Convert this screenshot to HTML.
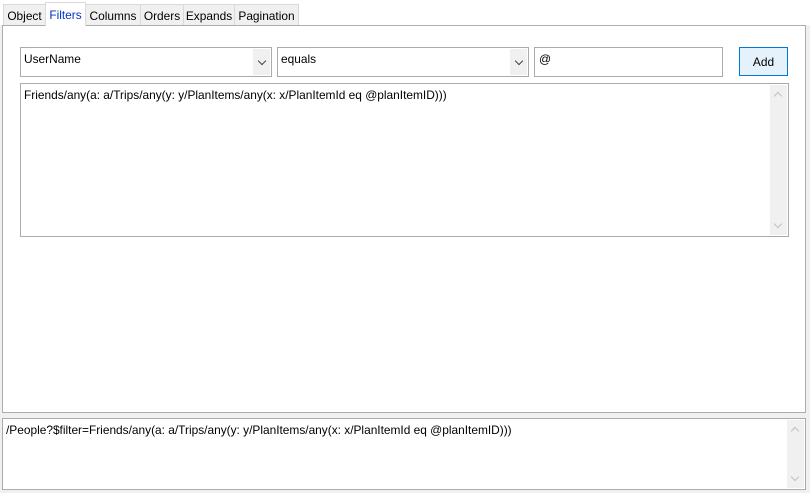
<!DOCTYPE html>
<html><head><style>
*{box-sizing:border-box;margin:0;padding:0}
body{width:810px;height:493px;background:#f0f0f0;font-family:"Liberation Sans",sans-serif;font-size:11.9px;color:#000;position:relative;overflow:hidden}
.abs{position:absolute}
.tab{position:absolute;top:4px;height:21px;border:1px solid #d9d9d9;border-bottom:none;background:#f0f0f0;padding:4px 0 0;text-align:center}
.sel{top:2px;height:24px;background:#fff;color:#0033cc;border-color:#d9d9d9;z-index:2;padding-top:5px}
.panel{left:2px;top:25px;width:804px;height:388px;background:#fff;border:1px solid #adadad}
.box{background:#fff;border:1px solid #ababab}
.dd{position:absolute;right:1px;top:1px;bottom:1px;width:17px;background:#f0f0f0;display:flex;align-items:center;justify-content:center}
.sb{position:absolute;top:1px;bottom:1px;right:1px;width:17px;background:#f0f0f0}
.chev{width:6px;height:6px;border-right:1.5px solid #444;border-bottom:1.5px solid #444;transform:rotate(45deg);margin-top:-3px}
.sc{position:absolute;left:5px;width:6px;height:6px;border-left:1.2px solid #c0c0c0;border-top:1.2px solid #c0c0c0}
</style></head><body>
<div class="abs" style="left:0;top:0;width:810px;height:25px;background:#fff"></div>
<div class="tab" style="left:3px;width:43px">Object</div>
<div class="tab sel" style="left:45px;width:41px">Filters</div>
<div class="tab" style="left:85px;width:56px">Columns</div>
<div class="tab" style="left:140px;width:44px">Orders</div>
<div class="tab" style="left:183px;width:52px">Expands</div>
<div class="tab" style="left:234px;width:65px">Pagination</div>
<div class="abs panel"></div>
<div class="abs box" style="left:20px;top:47px;width:252px;height:30px;padding:4px 0 0 3px">UserName<div class="dd"><div class="chev"></div></div></div>
<div class="abs box" style="left:277px;top:47px;width:252px;height:30px;padding:4px 0 0 3px">equals<div class="dd"><div class="chev"></div></div></div>
<div class="abs box" style="left:534px;top:47px;width:189px;height:30px;padding:4px 0 0 4px">@</div>
<div class="abs" style="left:739px;top:47px;width:49px;height:29px;background:#e5f1fb;border:1px solid #0078d7;text-align:center;padding-top:7px">Add</div>
<div class="abs box" style="left:20px;top:83px;width:769px;height:154px;padding:4px 0 0 3px">Friends/any(a: a/Trips/any(y: y/PlanItems/any(x: x/PlanItemId eq @planItemID)))<div class="sb"><div class="sc" style="top:8px;transform:rotate(45deg)"></div><div class="sc" style="bottom:8px;transform:rotate(225deg)"></div></div></div>
<div class="abs box" style="left:2px;top:418px;width:804px;height:72px;padding:4px 0 0 3px">/People?$filter=Friends/any(a: a/Trips/any(y: y/PlanItems/any(x: x/PlanItemId eq @planItemID)))<div class="sb"><div class="sc" style="top:8px;transform:rotate(45deg)"></div><div class="sc" style="bottom:8px;transform:rotate(225deg)"></div></div></div>
</body></html>
